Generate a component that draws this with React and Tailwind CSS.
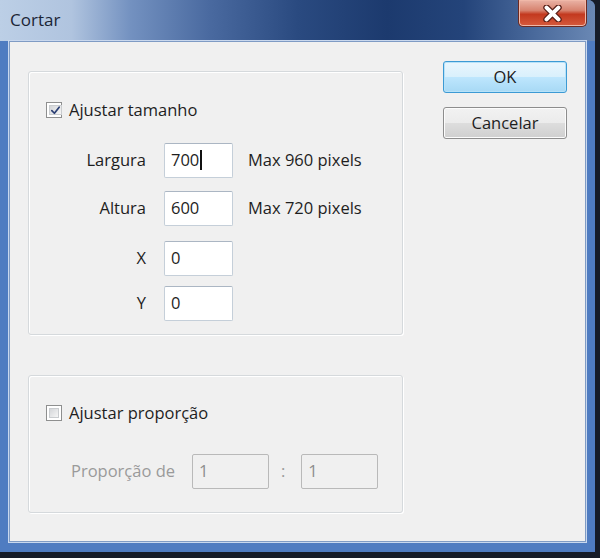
import { useState } from 'react';

// Win7-style "Cortar" crop dialog

const CheckMark = () => (
  <svg viewBox="0 0 12 12" className="w-[11px] h-[11px]">
    <path d="M2 6.2 L4.8 9 L10 2.5" fill="none" stroke="#2b3f74" strokeWidth="1.9" strokeLinecap="round" strokeLinejoin="round" />
  </svg>
);

const CloseGlyph = () => (
  <svg viewBox="0 0 16 14" className="w-[19px] h-[17px]">
    <path d="M3 2 L13 12 M13 2 L3 12" stroke="#5a2018" strokeWidth="5.5" strokeLinecap="round" />
    <path d="M3 2 L13 12 M13 2 L3 12" stroke="#ffffff" strokeWidth="3.4" strokeLinecap="round" />
  </svg>
);

function Checkbox({ checked }) {
  return (
    <span className="w-[16px] h-[16px] border border-[#8e8f8f] bg-white p-[2px] flex">
      <span className="flex-1 flex items-center justify-center border border-[#c9cccf] bg-[linear-gradient(135deg,#d4d6d9,#f6f6f6)]">
        {checked && <CheckMark />}
      </span>
    </span>
  );
}

function Field({ value, caret, disabled, w = 'w-[69px]' }) {
  return (
    <div
      className={`${w} h-[35px] border rounded-[2px] flex items-start pt-[4px] pl-[6px] text-[16.5px] ${
        disabled
          ? 'border-[#b9b9b9] bg-[#f0f0f0] text-[#8d8d8d]'
          : 'border-[#c5cfd9] border-t-[#abb6c3] bg-white text-[#1e1e1e]'
      }`}
    >
      <span>{value}</span>
      {caret && <span className="w-[1.5px] h-[20px] bg-[#111] ml-[1px] mt-[2px]" />}
    </div>
  );
}

function Row({ label, value, caret, hint, className = '' }) {
  return (
    <div className={`flex items-center ${className}`}>
      <span className="w-[117px] text-right text-[16.5px]">{label}</span>
      <div className="ml-[18px]">
        <Field value={value} caret={caret} />
      </div>
      {hint && <span className="ml-[15px] text-[16.5px]">{hint}</span>}
    </div>
  );
}

function Button({ children, primary }) {
  return (
    <button
      className={`w-[124px] h-[32px] rounded-[3px] border text-[16.5px] text-[#1e1e1e] ${
        primary
          ? 'border-[#3c9ad4] bg-[linear-gradient(#eaf6fd,#d9f0fc_50%,#bee6fd_51%,#a7d9f5)] shadow-[inset_0_0_0_1px_#b8e2f8]'
          : 'border-[#8d8d8d] bg-[linear-gradient(#f2f2f2,#ebebeb_50%,#dddddd_51%,#cfcfcf)] shadow-[inset_0_0_0_1px_#fcfcfc]'
      }`}
    >
      {children}
    </button>
  );
}

export default function App() {
  const [sizeOn] = useState(true);

  return (
    <div className="w-[600px] h-[558px] bg-[#161c28] overflow-hidden font-['Open_Sans',sans-serif] text-[#1e1e1e]">
      <div className="w-[595px] h-[552px] flex flex-col rounded-tr-[7px] bg-[#4f7cc1] overflow-hidden">
        {/* Title bar */}
        <div className="h-[41px] flex justify-between bg-[linear-gradient(90deg,#bccfe6_0%,#b0c4df_12%,#7391c0_22%,#4a6aa0_35%,#2a4a80_50%,#1c3a6e_65%,#24447a_78%,#4a6a9c_90%,#6a88b4_100%)]">
          <span className="ml-[10px] mt-[7px] text-[17px] text-[#1b2535]">Cortar</span>
          <div className="w-[69px] h-[27px] mr-[8px] rounded-b-[5px] border border-t-0 border-[#6b2a22] bg-[linear-gradient(#eab3a6,#d7836f_40%,#c3391f_55%,#d65a3c)] flex items-center justify-center shadow-[inset_0_0_0_1px_#f0b8a8]">
            <CloseGlyph />
          </div>
        </div>

        {/* Client area */}
        <div className="flex-1 mx-[9px] mb-[10px] bg-[#f0f0f0] border border-[#7f9bc4] shadow-[0_0_0_1px_#c9d8ee] flex pl-[18px] pt-[19px]">
          <div className="flex flex-col">
            {/* Size group */}
            <div className="w-[375px] h-[264px] mt-[10px] border border-[#d5d9dc] rounded-[3px] shadow-[inset_1px_1px_0_#fff,1px_1px_0_#fff] flex flex-col pl-[17px] pt-[30px]">
              <label className="flex items-center h-[16px]">
                <Checkbox checked={sizeOn} />
                <span className="ml-[7px] text-[16.5px] leading-none">Ajustar tamanho</span>
              </label>
              <div className="-ml-[17px]">
                <Row label="Largura" value="700" caret hint="Max 960 pixels" className="mt-[25px]" />
                <Row label="Altura" value="600" hint="Max 720 pixels" className="mt-[13px]" />
                <Row label="X" value="0" className="mt-[15px]" />
                <Row label="Y" value="0" className="mt-[10px]" />
              </div>
            </div>

            {/* Proportion group */}
            <div className="w-[375px] h-[138px] mt-[40px] border border-[#d5d9dc] rounded-[3px] shadow-[inset_1px_1px_0_#fff,1px_1px_0_#fff] flex flex-col pl-[17px] pt-[29px]">
              <label className="flex items-center h-[16px]">
                <Checkbox checked={false} />
                <span className="ml-[7px] text-[16.5px] leading-none">Ajustar proporção</span>
              </label>
              <div className="flex items-center mt-[33px] ml-[25px] text-[#9a9a9a] text-[16.5px]">
                <span>Proporção de</span>
                <div className="ml-[17px]">
                  <Field value="1" disabled w="w-[77px]" />
                </div>
                <span className="ml-[12px] mr-[16px]">:</span>
                <Field value="1" disabled w="w-[77px]" />
              </div>
            </div>
          </div>

          {/* Buttons */}
          <div className="ml-[40px] flex flex-col gap-[14px]">
            <Button primary>OK</Button>
            <Button>Cancelar</Button>
          </div>
        </div>
      </div>
    </div>
  );
}
